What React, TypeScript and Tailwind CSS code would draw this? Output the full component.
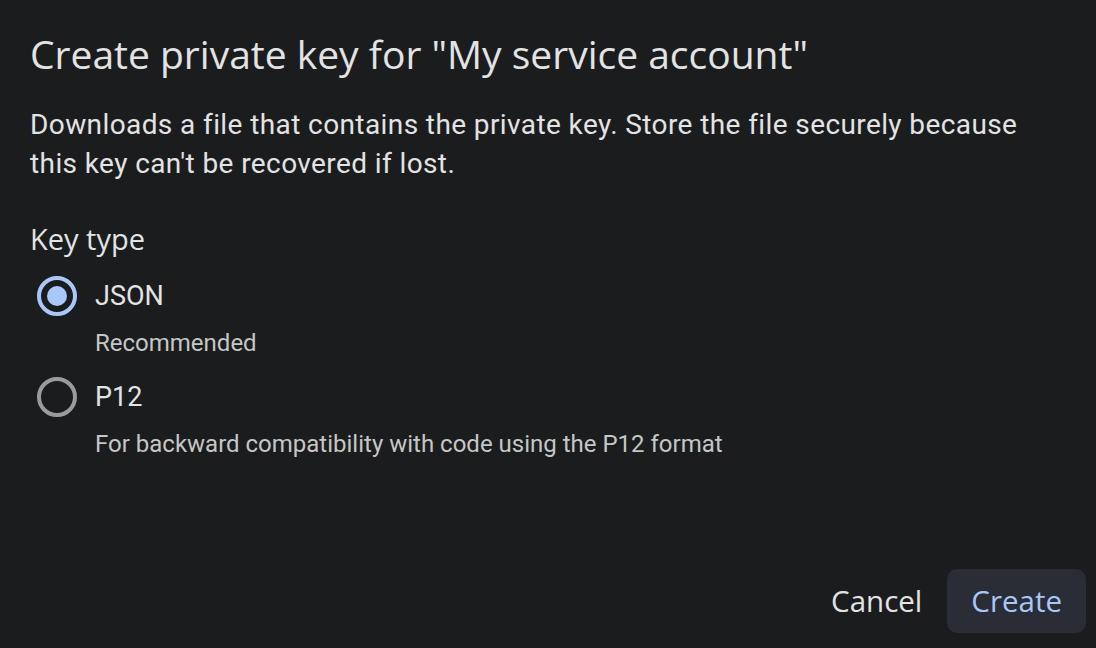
import { useState } from "react";

type KeyOption = { id: string; label: string; hint: string };

const options: KeyOption[] = [
  { id: "json", label: "JSON", hint: "Recommended" },
  { id: "p12", label: "P12", hint: "For backward compatibility with code using the P12 format" },
];

function Radio({ checked }: { checked: boolean }) {
  return (
    <span
      className={
        "flex h-[40px] w-[40px] shrink-0 items-center justify-center rounded-full border-[4px] " +
        (checked ? "border-[#a8c7fa]" : "border-[#9a9b9c]")
      }
    >
      {checked && <span className="h-[20px] w-[20px] rounded-full bg-[#a8c7fa]" />}
    </span>
  );
}

export default function App() {
  const [selected, setSelected] = useState("json");

  return (
    <div className="flex h-[648px] w-[1096px] flex-col bg-[#1b1c1e] text-[#e3e3e3] [font-family:Roboto,'Liberation_Sans',sans-serif]">
      <div className="px-[30px] pt-[28px]">
        <h1 className="text-[39px] leading-[52px] [font-family:'Open_Sans',sans-serif] font-normal">
          Create private key for "My service account"
        </h1>
        <p className="mt-[25px] text-[28px] leading-[39px] tracking-[0.4px] text-[#e3e3e3]">
          Downloads a file that contains the private key. Store the file securely because
          <br />
          this key can't be recovered if lost.
        </p>

        <div className="mt-[38px] text-[29px] leading-[36px] font-medium [font-family:'Open_Sans',sans-serif]">
          Key type
        </div>

        <div className="mt-[19px] flex flex-col gap-[19px]">
          {options.map((o) => (
            <button
              key={o.id}
              onClick={() => setSelected(o.id)}
              className="flex flex-col items-start text-left"
            >
              <div className="flex items-center gap-[18px] pl-[7px]">
                <Radio checked={selected === o.id} />
                <span className="text-[27px] leading-[40px]">{o.label}</span>
              </div>
              <span className="ml-[65px] mt-[12px] text-[24px] leading-[30px] text-[#c4c7c5]">
                {o.hint}
              </span>
            </button>
          ))}
        </div>
      </div>

      <div className="mt-auto flex items-center justify-end gap-[25px] pb-[15px] pr-[10px] [font-family:'Open_Sans',sans-serif] font-medium">
        <button className="text-[29.5px] leading-[64px] text-[#e3e3e3]">Cancel</button>
        <button className="h-[64px] rounded-[10px] bg-[#2a2d35] px-[24px] text-[29.5px] text-[#a8c7fa]">
          Create
        </button>
      </div>
    </div>
  );
}
